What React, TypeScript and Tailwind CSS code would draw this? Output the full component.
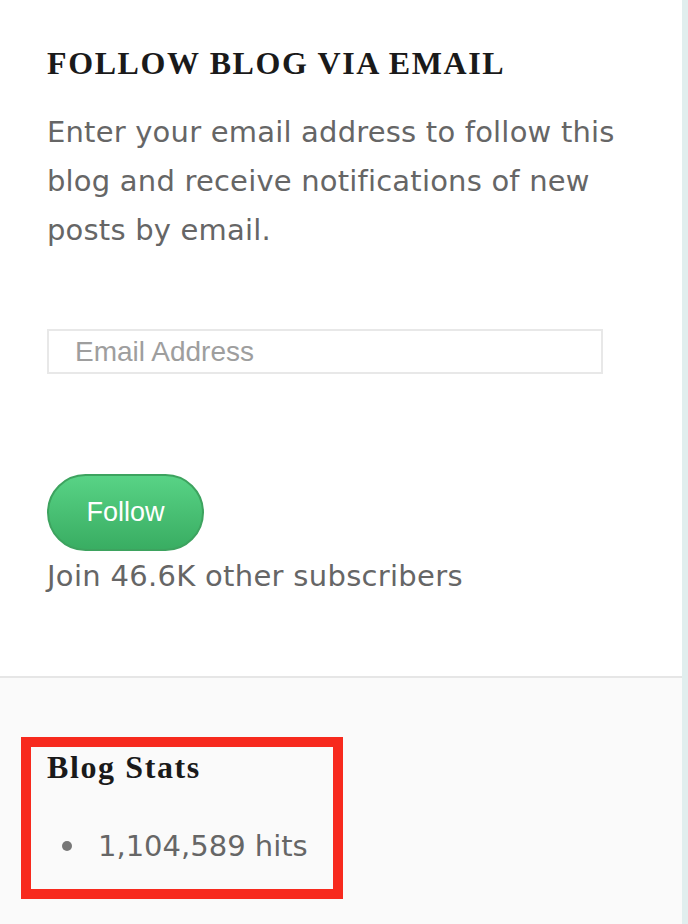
export default function App() {
  return (
    <div className="flex min-h-[924px] w-[688px] bg-[#e1eeee]">
      <div className="flex w-[682px] flex-col">
        <section className="border-b-2 border-[#e6e6e6] bg-white px-[47px] pb-[83px] pt-[43px]">
          <h2 className="font-['Liberation_Serif','DejaVu_Serif',serif] text-[32px] font-bold uppercase leading-[40px] tracking-[1.6px] text-[#1a1a1a]">
            Follow Blog via Email
          </h2>
          <p className="mt-[25px] font-['DejaVu_Sans',Verdana,sans-serif] text-[29px] leading-[49px] tracking-[0.2px] text-[#666]">
            Enter your email address to follow this blog and receive notifications of new posts by email.
          </p>
          <input
            type="email"
            placeholder="Email Address"
            className="mt-[74px] block h-[45px] w-[556px] border-2 border-[#e8e8e8] bg-white px-[26px] font-['Liberation_Sans',Arial,sans-serif] text-[28px] text-[#666] outline-none placeholder:text-[#9e9e9e]"
          />
          <button className="mt-[100px] block h-[77px] w-[157px] rounded-full border-2 border-[#3da35f] bg-gradient-to-b from-[#58d386] to-[#39ad62] font-['Liberation_Sans',Arial,sans-serif] text-[27px] text-white">
            Follow
          </button>
          <p className="mt-[8px] font-['DejaVu_Sans',Verdana,sans-serif] text-[29px] leading-[34px] tracking-[0.3px] text-[#666]">
            Join 46.6K other subscribers
          </p>
        </section>
        <section className="flex-1 bg-[#fafafa] px-[21px] pt-[59px]">
          <div className="w-[322px] border-[10px] border-[#f72a1e] px-[16px] pb-[26px]">
            <h2 className="font-['Liberation_Serif','DejaVu_Serif',serif] text-[32px] font-bold leading-[40px] tracking-[1.6px] text-[#1a1a1a]">
              Blog Stats
            </h2>
            <ul className="mt-[42px] font-['DejaVu_Sans',Verdana,sans-serif] text-[29px] leading-[34px] text-[#666]">
              <li className="flex items-center">
                <span className="ml-[15px] mr-[26px] h-[10px] w-[10px] rounded-full bg-[#777]" />
                1,104,589 hits
              </li>
            </ul>
          </div>
        </section>
      </div>
    </div>
  );
}
